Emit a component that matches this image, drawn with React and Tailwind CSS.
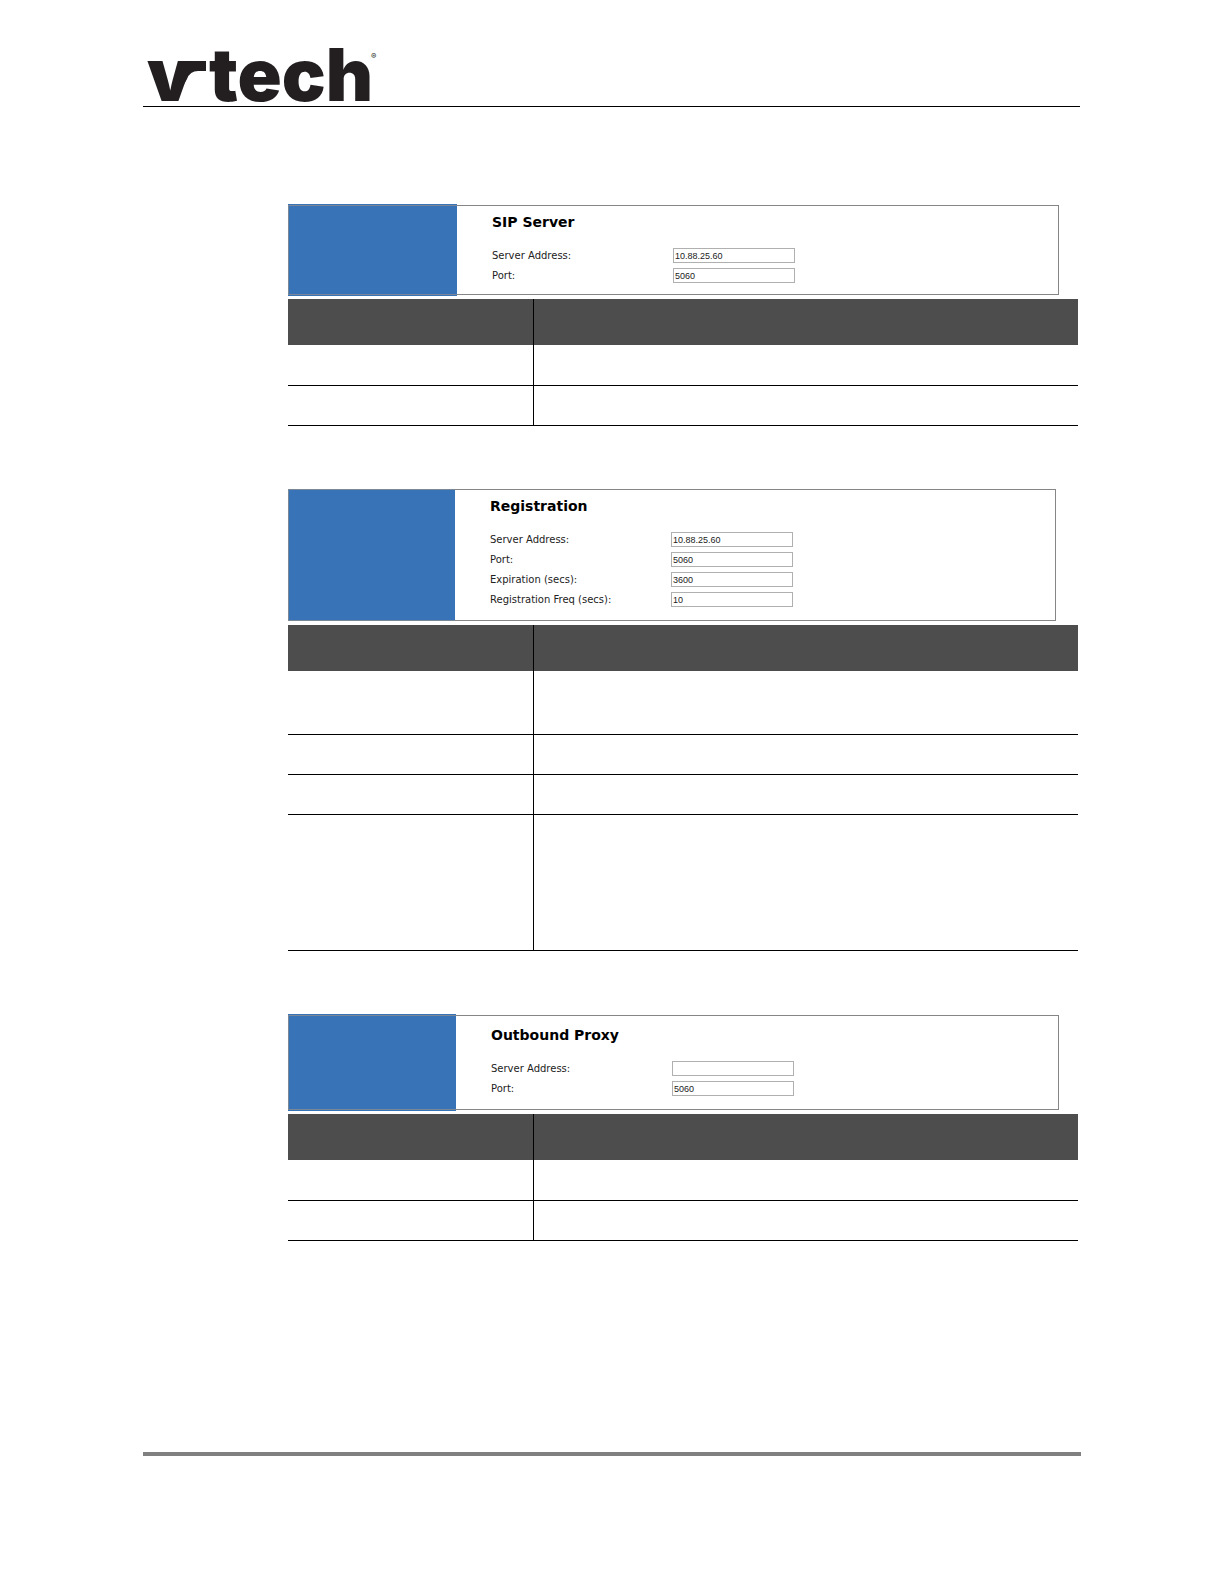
import React from 'react';

const sections = [
  {
    id: 'sip',
    title: 'SIP Server',
    fields: [
      { label: 'Server Address:', value: '10.88.25.60' },
      { label: 'Port:', value: '5060' },
    ],
    rows: ['h-[41px]', 'h-10'],
    panel: 'mr-[19px] mb-[3px] h-[92px]',
    side: 'w-[169px] border-y',
    body: 'my-px pt-1.5',
  },
  {
    id: 'registration',
    title: 'Registration',
    fields: [
      { label: 'Server Address:', value: '10.88.25.60' },
      { label: 'Port:', value: '5060' },
      { label: 'Expiration (secs):', value: '3600' },
      { label: 'Registration Freq (secs):', value: '10' },
    ],
    rows: ['h-16', 'h-10', 'h-10', 'h-[136px]'],
    panel: 'mr-[22px] mb-1 h-[132px]',
    side: 'w-[167px]',
    body: 'pt-1.5',
  },
  {
    id: 'proxy',
    title: 'Outbound Proxy',
    fields: [
      { label: 'Server Address:', value: '' },
      { label: 'Port:', value: '5060' },
    ],
    rows: ['h-[41px]', 'h-10'],
    panel: 'mr-[19px] mb-[3px] h-[97px]',
    side: 'w-[168px] border-y',
    body: 'my-px pt-[9px]',
  },
];

const Logo = () => (
  <svg className="block h-[60px] w-[240px] overflow-visible" viewBox="0 0 240 60" role="img" aria-label="vtech">
    <g fill="#231f20" fontFamily="Inter, sans-serif">
      <text y="55" fontSize="73" fontWeight="900">
        <tspan x="4">v</tspan>
        <tspan x="66">tech</tspan>
      </text>
      {/* arm on the right of the v */}
      <path d="M36 22 Q39 15 46 15 H63 V25 H55 Q47 25 44 33 L40 40 Z" />
      <text x="228" y="13" fontSize="8">®</text>
    </g>
  </svg>
);

const SettingsPanel = ({ section }) => (
  <form className={`flex ${section.panel}`}>
    <div className={`shrink-0 border-[#3873b7] ${section.side}`}>
      <div className="h-full border-y border-l border-[#7a8797] bg-[#3873b7]" />
    </div>
    <div className={`grow border-y border-r border-[#868686] pl-[35px] ${section.body}`}>
      <h2 className="text-sm leading-5 font-bold text-black">{section.title}</h2>
      <div className="mt-4 flex flex-col gap-[5px]">
        {section.fields.map((field, i) => (
          <div key={field.label} className="flex h-[15px] items-center">
            <label htmlFor={`${section.id}-${i}`} className="w-[181px] text-[10px] leading-[15px] text-[#222]">
              {field.label}
            </label>
            <input
              id={`${section.id}-${i}`}
              type="text"
              defaultValue={field.value}
              className="h-[15px] w-[122px] border border-[#b0b0b0] bg-white px-px font-['Liberation_Sans',sans-serif] text-[9px] leading-[13px] text-[#222]"
            />
          </div>
        ))}
      </div>
    </div>
  </form>
);

const SettingsTable = ({ rows }) => (
  <table className="w-full table-fixed border-separate border-spacing-0">
    <thead>
      <tr className="h-[46px] bg-[#4d4d4d]">
        <th className="w-[246px] border-r border-black p-0" />
        <th className="p-0" />
      </tr>
    </thead>
    <tbody>
      {rows.map((height, i) => (
        <tr key={i} className={height}>
          <td className="border-r border-b border-black p-0" />
          <td className="border-b border-black p-0" />
        </tr>
      ))}
    </tbody>
  </table>
);

const App = () => {
  return (
    <div className="min-h-screen bg-white px-[143px] pt-[46px] pb-32 font-['DejaVu_Sans',sans-serif]">
      <header className="mr-px border-b border-black">
        <Logo />
      </header>

      <main className="mt-[97px] mr-[3px] ml-[145px] flex flex-col gap-[63px]">
        {sections.map((section) => (
          <section key={section.id}>
            <SettingsPanel section={section} />
            <SettingsTable rows={section.rows} />
          </section>
        ))}
      </main>

      <footer className="mt-[211px] h-1 bg-[#808080]" />
    </div>
  );
};

export default App;
